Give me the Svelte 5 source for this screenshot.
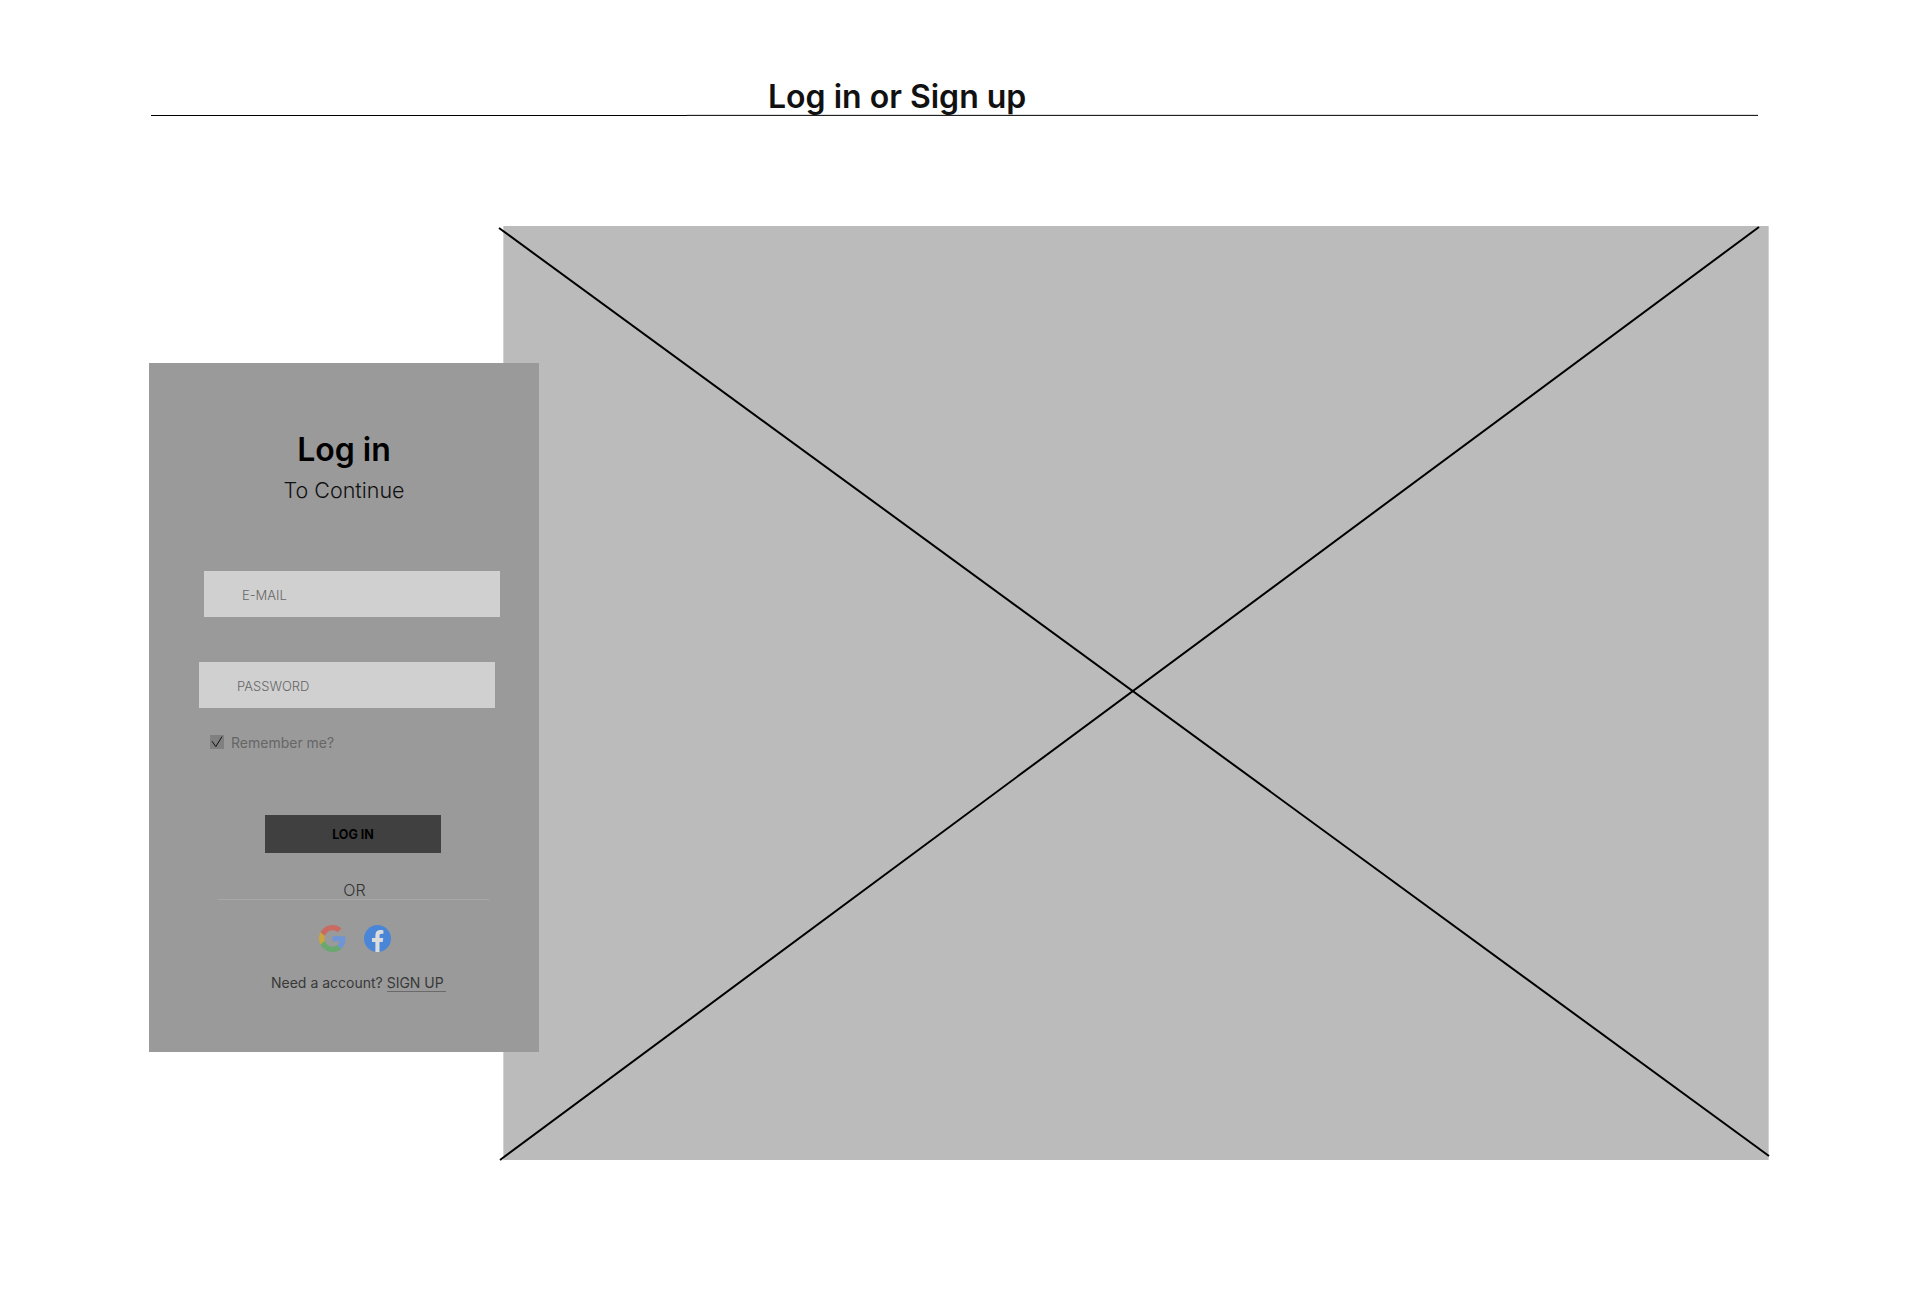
<script>
  let email = $state("");
  let password = $state("");
  let remember = $state(true);
</script>

<div class="page">
  <header class="top">
    <h1>Log in or Sign up</h1>
  </header>

  <main class="hero">
    <div class="picture">
      <svg class="cross" viewBox="0 0 1266 934" aria-hidden="true">
        <line x1="-4" y1="2" x2="1266" y2="930" />
        <line x1="-3" y1="934" x2="1256" y2="1" />
      </svg>
    </div>

    <section class="card">
      <h2>Log in</h2>
      <p class="sub">To Continue</p>

      <input class="field email" type="text" placeholder="E-MAIL" bind:value={email} />
      <input class="field password" type="password" placeholder="PASSWORD" bind:value={password} />

      <label class="remember">
        <input type="checkbox" bind:checked={remember} />
        <span class="box">
          {#if remember}
            <svg viewBox="0 0 14 14" width="14" height="14" aria-hidden="true">
              <path d="M2 6.200 L5.800 11.600 L12 1.600" />
            </svg>
          {/if}
        </span>
        Remember me?
      </label>

      <button class="login" type="button">LOG IN</button>

      <div class="or">OR</div>

      <div class="social">
        <svg viewBox="0 0 48 48" width="27" height="27" aria-label="Google">
          <path fill="#c96b60" d="M24 9.500c3.500 0 6.700 1.200 9.200 3.600l6.900-6.900C35.900 2.400 30.500 0 24 0 14.600 0 6.500 5.400 2.600 13.200l8 6.200C12.500 13.700 17.800 9.500 24 9.500z"/>
          <path fill="#6f94d8" d="M47 24.500c0-1.600-.1-3.100-.4-4.500H24v9h12.900c-.6 3-2.200 5.500-4.700 7.200l7.700 6c4.500-4.200 7.100-10.300 7.100-17.700z"/>
          <path fill="#c9a63e" d="M10.500 28.600c-.5-1.400-.8-3-.8-4.600s.3-3.200.8-4.600l-8-6.200C.9 16.500 0 20.100 0 24s.9 7.500 2.600 10.800l7.900-6.200z"/>
          <path fill="#69a86f" d="M24 48c6.500 0 11.900-2.100 15.900-5.800l-7.700-6c-2.200 1.400-4.900 2.300-8.200 2.300-6.200 0-11.500-4.200-13.400-9.900l-8 6.200C6.500 42.600 14.600 48 24 48z"/>
        </svg>
        <svg viewBox="0 0 27 27" width="27" height="27" aria-label="Facebook">
          <circle cx="13.500" cy="13.500" r="13.500" fill="#4a86d8"/>
          <path fill="#dcdcdc" d="M15.500 27V17h3.200l.6-3.900h-3.800v-2.300c0-1.100.5-2 2.100-2h1.800V5.400c-.9-.1-2-.3-3-.3-3.100 0-5 1.900-5 5.200v2.800H8v3.900h3.400v10z"/>
        </svg>
      </div>

      <p class="signup">Need a account? <a href="#signup">SIGN UP</a></p>
    </section>
  </main>
</div>

<style>
  :global(body) {
    margin: 0;
    background: #fff;
    font-family: "Inter", "Liberation Sans", sans-serif;
  }

  .page {
    padding: 73px 0 0 149px;
    height: 1227px;
  }

  .top {
    position: relative;
    margin-left: 2px;
    width: 1607px;
    height: 42px;
    border-bottom: 1px solid #000;
  }

  /* the rule is softer from just before the title to its right end */
  .top::after {
    content: "";
    position: absolute;
    left: 536px;
    right: 0;
    bottom: -1px;
    height: 2px;
    background: linear-gradient(#dcdcdc 50%, #222 50%);
  }

  h1 {
    position: relative;
    z-index: 1;
    margin: 0 0 0 617px;
    font-size: 32px;
    line-height: 48px;
    font-weight: 600;
    color: #111;
    height: 42px;
  }

  .hero {
    display: grid;
    grid-template-columns: 1fr;
    margin-top: 110px;
  }

  .picture,
  .card {
    grid-row: 1;
    grid-column: 1;
  }

  .picture {
    position: relative;
    margin-left: 354px;
    width: 1266px;
    height: 934px;
    background: #bbbbbb;
    box-shadow: inset 1px 0 #d2d2d2, inset -1px 0 #d2d2d2;
  }

  .cross {
    position: absolute;
    inset: 0;
    width: 100%;
    height: 100%;
    overflow: visible;
  }

  .cross line {
    stroke: #000;
    stroke-width: 2;
  }

  .card {
    margin-top: 137px;
    width: 390px;
    height: 689px;
    padding-top: 67px;
    box-sizing: border-box;
    background: #9a9a9a;
    display: flex;
    flex-direction: column;
    z-index: 1;
  }

  h2 {
    margin: 0;
    text-align: center;
    font-size: 32px;
    line-height: 40px;
    font-weight: 600;
    color: #000;
  }

  .sub {
    margin: 4px 0 0;
    text-align: center;
    font-size: 21.5px;
    line-height: 32px;
    font-weight: 300;
    color: #111;
  }

  .field {
    display: block;
    width: 296px;
    height: 46px;
    box-sizing: border-box;
    padding: 2px 0 0 38px;
    border: 0;
    outline: 0;
    background: #d0d0d0;
    font: 300 13px "Inter", sans-serif;
    color: #333;
  }

  .field::placeholder {
    color: #666;
    opacity: 1;
  }

  .email {
    margin: 65px 0 0 55px;
  }

  .password {
    margin: 45px 0 0 50px;
  }

  .remember {
    display: flex;
    align-items: center;
    gap: 7px;
    margin: 27px 0 0 61px;
    height: 14px;
    font-size: 14px;
    color: #666;
  }

  .remember input {
    display: none;
  }

  .box {
    width: 14px;
    height: 14px;
    background: #808080;
    flex: none;
  }

  .box svg {
    display: block;
  }

  .box path {
    fill: none;
    stroke: #111;
    stroke-width: 1;
  }

  .login {
    display: block;
    margin: 66px 0 0 116px;
    width: 176px;
    height: 38px;
    padding: 0;
    border: 0;
    background: #404040;
    color: #000;
    font: 700 12.5px "Inter", sans-serif;
  }

  .or {
    margin: 26px 0 0 69px;
    padding-left: 2px;
    width: 269px;
    height: 20px;
    border-bottom: 1px solid #a8a8a8;
    text-align: center;
    font-size: 16px;
    line-height: 23px;
    font-weight: 300;
    color: #333;
  }

  .social {
    display: flex;
    gap: 18px;
    margin: 25px 0 0 170px;
  }

  .social svg {
    display: block;
  }

  .signup {
    margin: 22px 0 0 122px;
    font-size: 14px;
    line-height: 18px;
    color: #383838;
  }

  .signup a {
    color: #383838;
    text-decoration: none;
    padding-right: 2px;
    border-bottom: 1px solid #6a6a6a;
  }
</style>
